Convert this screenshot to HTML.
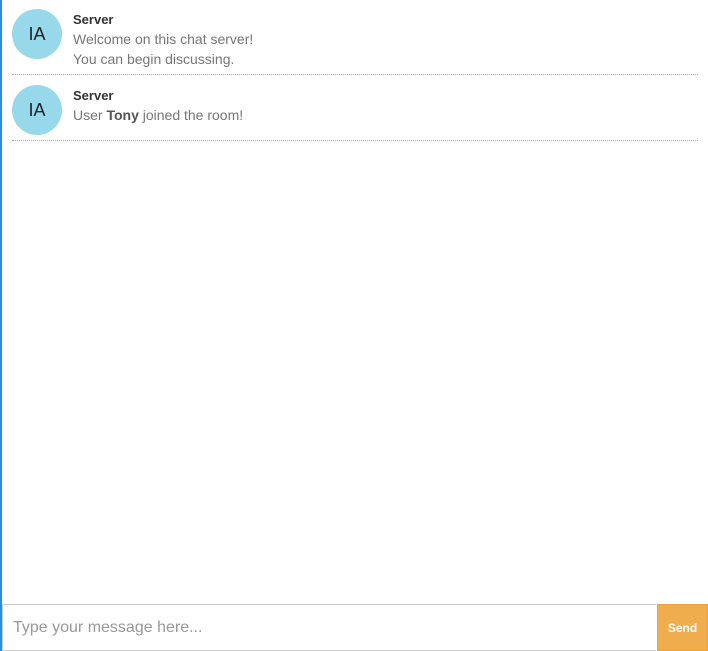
<!DOCTYPE html>
<html><head><style>
body{margin:0;width:708px;height:651px;background:#fff;font-family:"Liberation Sans",sans-serif;position:relative;overflow:hidden}
.bl{position:absolute;left:0;top:0;width:2px;height:651px;background:#2a8fe0}
.av{position:absolute;left:12px;width:50px;height:50px;border-radius:50%;background:#97d8ea;color:#222;font-size:18px;line-height:50px;text-align:center}
.n{position:absolute;left:73px;font-size:13px;font-weight:bold;color:#333}
.t{position:absolute;left:73px;font-size:14px;color:#777}
.t b{color:#555}
.hr{position:absolute;left:12px;width:686px;border-top:1px dotted #aaa}
.in{position:absolute;left:2px;top:604px;height:45px;border:1px solid #ccc;border-right:none;font-size:16px;color:#999;line-height:45px;padding-left:10px}
.bt{position:absolute;left:657px;top:604px;background:#f0ad4e;border:1px solid #eea236;color:#fff;font-size:12px;font-weight:bold;text-align:center;line-height:46px;box-sizing:border-box;width:51px;height:47px}
</style></head><body>
<div class="bl"></div>
<div class="av" style="top:9px">IA</div>
<div class="n" style="top:12px">Server</div>
<div class="t" style="top:31px">Welcome on this chat server!</div>
<div class="t" style="top:51px">You can begin discussing.</div>
<div class="hr" style="top:74px"></div>
<div class="av" style="top:85px">IA</div>
<div class="n" style="top:88px">Server</div>
<div class="t" style="top:107px">User <b>Tony</b> joined the room!</div>
<div class="hr" style="top:140px"></div>
<div class="in" style="width:643px">Type your message here...</div>
<div class="bt">Send</div>
</body></html>
